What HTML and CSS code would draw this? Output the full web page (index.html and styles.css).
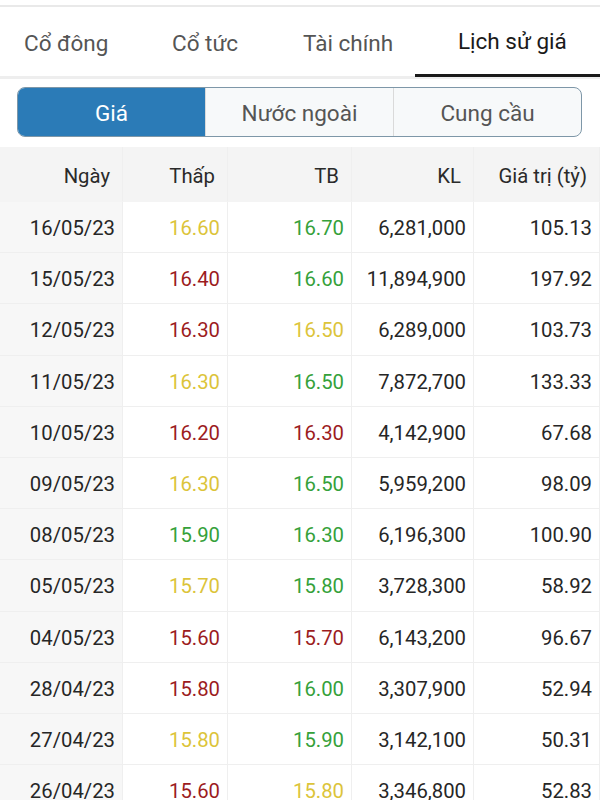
FILE: index.html
```html
<!DOCTYPE html>
<html lang="vi">
<head>
<meta charset="utf-8">
<link rel="stylesheet" href="styles.css">
</head>
<body>
<div class="topline"></div>
<nav class="tabs">
  <div class="tab t1">Cổ đông</div>
  <div class="tab t2">Cổ tức</div>
  <div class="tab t3">Tài chính</div>
  <div class="tab t4 active">Lịch sử giá</div>
</nav>
<div class="seg-wrap">
  <div class="seg">
    <div class="seg-item active">Giá</div>
    <div class="seg-item">Nước ngoài</div>
    <div class="seg-item">Cung cầu</div>
  </div>
</div>
<div class="table">
  <div class="c h first">Ngày</div><div class="c h">Thấp</div><div class="c h">TB</div><div class="c h">KL</div><div class="c h">Giá trị (tỷ)</div>

  <div class="c d">16/05/23</div><div class="c y">16.60</div><div class="c g">16.70</div><div class="c">6,281,000</div><div class="c">105.13</div>
  <div class="c d">15/05/23</div><div class="c r">16.40</div><div class="c g">16.60</div><div class="c">11,894,900</div><div class="c">197.92</div>
  <div class="c d">12/05/23</div><div class="c r">16.30</div><div class="c y">16.50</div><div class="c">6,289,000</div><div class="c">103.73</div>
  <div class="c d">11/05/23</div><div class="c y">16.30</div><div class="c g">16.50</div><div class="c">7,872,700</div><div class="c">133.33</div>
  <div class="c d">10/05/23</div><div class="c r">16.20</div><div class="c r">16.30</div><div class="c">4,142,900</div><div class="c">67.68</div>
  <div class="c d">09/05/23</div><div class="c y">16.30</div><div class="c g">16.50</div><div class="c">5,959,200</div><div class="c">98.09</div>
  <div class="c d">08/05/23</div><div class="c g">15.90</div><div class="c g">16.30</div><div class="c">6,196,300</div><div class="c">100.90</div>
  <div class="c d">05/05/23</div><div class="c y">15.70</div><div class="c g">15.80</div><div class="c">3,728,300</div><div class="c">58.92</div>
  <div class="c d">04/05/23</div><div class="c r">15.60</div><div class="c r">15.70</div><div class="c">6,143,200</div><div class="c">96.67</div>
  <div class="c d">28/04/23</div><div class="c r">15.80</div><div class="c g">16.00</div><div class="c">3,307,900</div><div class="c">52.94</div>
  <div class="c d">27/04/23</div><div class="c y">15.80</div><div class="c g">15.90</div><div class="c">3,142,100</div><div class="c">50.31</div>
  <div class="c d">26/04/23</div><div class="c r">15.60</div><div class="c y">15.80</div><div class="c">3,346,800</div><div class="c">52.83</div>
</div>
</body>
</html>
```
FILE: styles.css
```css
* { box-sizing: border-box; }
html, body { margin: 0; padding: 0; background: #fff; }
body {
  font-family: Roboto, "Noto Sans", "Liberation Sans", sans-serif;
  color: #222;
  width: 600px;
  overflow: hidden;
}
.topline {
  height: 7px;
  border-bottom: 2px solid #e9e9e9;
}
.tabs {
  display: flex;
  height: 72px;
  border-bottom: 3px solid #eeeeee;
}
.tab {
  font-size: 22.5px;
  color: #555;
  line-height: 72px;
  height: 70px;
  white-space: nowrap;
}
.t1 { width: 140px; padding-left: 24px; }
.t2 { width: 132px; padding-left: 32px; }
.t3 { width: 143px; padding-left: 31px; }
.t4 { width: 185px; padding-left: 43px; }
.tab.active {
  color: #1a1a1a;
  border-bottom: 3px solid #1a1a1a;
  height: 70px;
  line-height: 69px;
}
.seg-wrap {
  padding: 8px 18px 0 17px;
  height: 68px;
}
.seg {
  display: flex;
  height: 50px;
  border: 1.5px solid #7e97a8;
  border-radius: 8px;
  overflow: hidden;
  background: #f7f9fa;
}
.seg-item {
  flex: 1;
  font-size: 22.5px;
  color: #555;
  display: flex;
  align-items: center;
  justify-content: center;
  padding-top: 2px;
  border-left: 1px solid #dadada;
}
.seg-item:first-child { border-left: none; }
.seg-item.active {
  background: #2b7bb7;
  color: #fff;
}
.table {
  display: grid;
  grid-template-columns: 123px 105px 124px 122px 126px;
  grid-template-rows: 55px;
  grid-auto-rows: 51.2px;
}
.c {
  font-size: 20.3px;
  text-align: right;
  padding-right: 7px;
  padding-top: 2px;
  display: flex;
  align-items: center;
  justify-content: flex-end;
  border-right: 1px solid #efefef;
  border-bottom: 1px solid #efefef;
  white-space: nowrap;
  color: #262626;
}
.c.h {
  background: #f4f4f4;
  padding-right: 12px;
  padding-top: 3px;
  color: #2a2a2a;
  border-bottom: 1px solid #f4f4f4;
}
.c.d { background: #f7f7f7; }
.y { color: #dcc43a !important; }
.r { color: #9c1c1e !important; }
.g { color: #35a13a !important; }
```
